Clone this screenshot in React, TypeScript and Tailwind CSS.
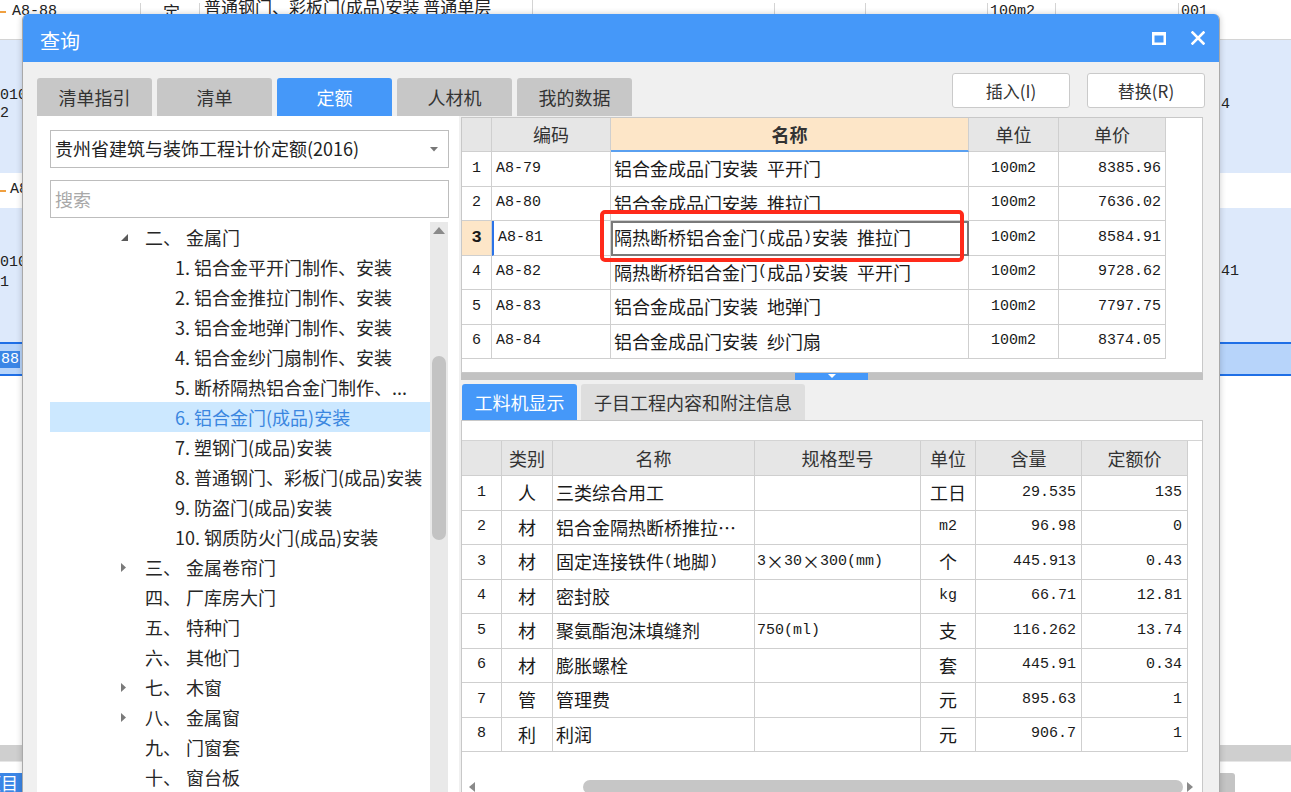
import React from 'react';

const CJK = "font-['Noto_Sans_CJK_SC',sans-serif]";
const MONO = "font-['Liberation_Mono','Noto_Sans_CJK_SC',monospace]";

// splits text into ascii runs (narrow mono) and cjk runs, like the old song-style grid font
function Mixed({ text }: { text: string }) {
  const runs: { s: string; a: boolean }[] = [];
  for (const ch of text) {
    const a = ch.charCodeAt(0) < 128;
    const last = runs[runs.length - 1];
    if (last && last.a === a) last.s += ch;
    else runs.push({ s: ch, a });
  }
  return (
    <>
      {runs.map((r, i) =>
        r.a ? (
          <span key={i} className="font-['Liberation_Mono',monospace] text-[15px] whitespace-pre">
            {r.s}
          </span>
        ) : (
          <span key={i} className="font-['Noto_Sans_CJK_SC',sans-serif] text-[18px]">
            {r.s}
          </span>
        )
      )}
    </>
  );
}

const quotaRows = [
  { code: 'A8-79', name: '铝合金成品门安装 平开门', unit: '100m2', price: '8385.96' },
  { code: 'A8-80', name: '铝合金成品门安装 推拉门', unit: '100m2', price: '7636.02' },
  { code: 'A8-81', name: '隔热断桥铝合金门(成品)安装 推拉门', unit: '100m2', price: '8584.91' },
  { code: 'A8-82', name: '隔热断桥铝合金门(成品)安装 平开门', unit: '100m2', price: '9728.62' },
  { code: 'A8-83', name: '铝合金成品门安装 地弹门', unit: '100m2', price: '7797.75' },
  { code: 'A8-84', name: '铝合金成品门安装 纱门扇', unit: '100m2', price: '8374.05' },
];

const resRows = [
  ['人', '三类综合用工', '', '工日', '29.535', '135'],
  ['材', '铝合金隔热断桥推拉…', '', 'm2', '96.98', '0'],
  ['材', '固定连接铁件(地脚)', '3×30×300(mm)', '个', '445.913', '0.43'],
  ['材', '密封胶', '', 'kg', '66.71', '12.81'],
  ['材', '聚氨酯泡沫填缝剂', '750(ml)', '支', '116.262', '13.74'],
  ['材', '膨胀螺栓', '', '套', '445.91', '0.34'],
  ['管', '管理费', '', '元', '895.63', '1'],
  ['利', '利润', '', '元', '906.7', '1'],
];

type TreeItem = { l: number; a?: 'down' | 'right'; n?: string; t: string; sel?: boolean };

const tree: TreeItem[] = [
  { l: 1, a: 'down', n: '二、', t: '金属门' },
  { l: 2, t: '1. 铝合金平开门制作、安装' },
  { l: 2, t: '2. 铝合金推拉门制作、安装' },
  { l: 2, t: '3. 铝合金地弹门制作、安装' },
  { l: 2, t: '4. 铝合金纱门扇制作、安装' },
  { l: 2, t: '5. 断桥隔热铝合金门制作、...' },
  { l: 2, t: '6. 铝合金门(成品)安装', sel: true },
  { l: 2, t: '7. 塑钢门(成品)安装' },
  { l: 2, t: '8. 普通钢门、彩板门(成品)安装' },
  { l: 2, t: '9. 防盗门(成品)安装' },
  { l: 2, t: '10. 钢质防火门(成品)安装' },
  { l: 1, a: 'right', n: '三、', t: '金属卷帘门' },
  { l: 1, n: '四、', t: '厂库房大门' },
  { l: 1, n: '五、', t: '特种门' },
  { l: 1, n: '六、', t: '其他门' },
  { l: 1, a: 'right', n: '七、', t: '木窗' },
  { l: 1, a: 'right', n: '八、', t: '金属窗' },
  { l: 1, n: '九、', t: '门窗套' },
  { l: 1, n: '十、', t: '窗台板' },
];

function Background() {
  return (
    <div className={`flex flex-col w-full h-full text-[#222] ${MONO} text-[15px]`}>
      {/* top row, mostly under the dialog */}
      <div className="h-[40px] flex border-b border-[#d4d4d4] leading-[18px] pt-[3px]">
        <div className="w-[141px] flex items-start border-r border-[#d4d4d4]">
          <span className="mt-[8px] w-[6px] h-[2px] bg-[#f0a040]" />
          <span className="ml-[6px]">A8-88</span>
        </div>
        <div className="w-[59px] border-r border-[#d4d4d4] pl-[22px]">
          <span className={`${CJK} text-[17px]`}>定</span>
        </div>
        <div className={`w-[333px] border-r border-[#d4d4d4] pl-[4px] ${CJK} text-[17px] -mt-[5px]`}>
          普通钢门、彩板门(成品)安装 普通单层
        </div>
        <div className="w-[242px] border-r border-[#d4d4d4]" />
        <div className="w-[91px] border-r border-[#d4d4d4]" />
        <div className="w-[122px] border-r border-[#d4d4d4]" />
        <div className="w-[68px] border-r border-[#d4d4d4] pl-[2px]">100m2</div>
        <div className="w-[123px] border-r border-[#d4d4d4]" />
        <div className="flex-1 pl-[2px]">001</div>
      </div>
      <div className="h-[133px] bg-[#dde9fb] flex justify-between leading-[18px]">
        <div className="pt-[47px]">
          010
          <br />2
        </div>
        <div className="pt-[56px] w-[70px]">4</div>
      </div>
      <div className="h-[35px] flex items-center">
        <span className="w-[6px] h-[2px] bg-[#f0a040]" />
        <span className="ml-[4px]">A8-81</span>
      </div>
      <div className="h-[134px] bg-[#dde9fb] flex justify-between leading-[20px]">
        <div className="pt-[45px]">
          010
          <br />1
        </div>
        <div className="pt-[54px] w-[70px]">41</div>
      </div>
      <div className="h-[34px] bg-[#b7d4fa] border-y-2 border-[#1f6fe6] flex items-center">
        <span className="bg-[#3b86e6] text-white leading-[17px] px-[1px]">88</span>
      </div>
      <div className="flex-1" />
      <div className="h-[17px] bg-[#cfcfcf] border-b border-[#e6e6e6]" />
      <div className="h-[11px]" />
      <div className="h-[19px] flex justify-between">
        <div className={`w-[22px] bg-[#3b86e6] text-white ${CJK} text-[17px] leading-[19px] overflow-hidden whitespace-nowrap`}>
          <span className="-ml-[16px]">项目</span>
        </div>
        <div className="w-[71px] flex">
          <div className="w-[15px] bg-[#c4c4c4] rounded-tr-[3px]" />
        </div>
      </div>
    </div>
  );
}

function TreeArrow({ dir }: { dir?: 'down' | 'right' }) {
  if (dir === 'down')
    return (
      <svg width="9" height="9" viewBox="0 0 9 9">
        <polygon points="8,1 8,8 1,8" fill="#5a5a5a" />
      </svg>
    );
  if (dir === 'right')
    return (
      <svg width="7" height="11" viewBox="0 0 7 11">
        <polygon points="1,1 6,5.5 1,10" fill="#7a7a7a" />
      </svg>
    );
  return null;
}

function LeftPanel() {
  return (
    <div className="w-[422px] bg-white flex flex-col pl-[13px] pt-[14px]">
      <div className="w-[399px] h-[38px] border border-[#bdbdbd] flex items-center pl-[4px] pr-[10px] bg-white">
        <span className={`${CJK} text-[18px] text-[#222] -mt-[1px]`}>贵州省建筑与装饰工程计价定额(2016)</span>
        <svg className="ml-auto" width="8" height="5" viewBox="0 0 8 5">
          <polygon points="0,0 8,0 4,4.5" fill="#777" />
        </svg>
      </div>
      <div className="mt-[12px] w-[399px] h-[38px] border border-[#bdbdbd] flex items-center pl-[4px]">
        <span className={`${CJK} text-[18px] text-[#a8a8a8]`}>搜索</span>
      </div>
      <div className="mt-[4px] flex flex-1">
        <div className="w-[380px] flex flex-col">
          {tree.map((it, i) => (
            <div
              key={i}
              className={`h-[30px] shrink-0 flex items-center ${CJK} text-[18px] whitespace-nowrap ${
                it.sel ? 'bg-[#cce8ff] text-[#3a86e0]' : 'text-[#262626]'
              } ${it.l === 1 ? 'pl-[70px]' : 'pl-[125px]'}`}
            >
              {it.l === 1 ? (
                <>
                  <span className="w-[25px] flex items-center">
                    <TreeArrow dir={it.a} />
                  </span>
                  <span className="w-[41px]">{it.n}</span>
                  <span>{it.t}</span>
                </>
              ) : (
                <span>{it.t}</span>
              )}
            </div>
          ))}
        </div>
        <div className="w-[18px] bg-[#e9e9e9] flex flex-col items-center pt-[5px]">
          <svg width="12" height="7" viewBox="0 0 12 7">
            <polygon points="6,0 12,7 0,7" fill="#8a8a8a" />
          </svg>
          <div className="mt-[122px] w-[14px] h-[184px] rounded-full bg-[#c3c3c3]" />
        </div>
      </div>
    </div>
  );
}

function QuotaTable() {
  const cell = 'border-r border-b border-[#cfcfcf] flex items-center';
  return (
    <div className="flex flex-col w-[704px]">
      <div className={`flex h-[34px] text-[18px] ${CJK} text-[#333]`}>
        <div className={`${cell} w-[30px] bg-[#e6e6e6]`} />
        <div className={`${cell} w-[119px] bg-[#e6e6e6] justify-center`}>编码</div>
        <div className={`${cell} w-[358px] bg-[#fde6c8] justify-center font-bold border-b-2 border-b-[#5aa0f0]`}>名称</div>
        <div className={`${cell} w-[90px] bg-[#e6e6e6] justify-center`}>单位</div>
        <div className={`${cell} w-[107px] bg-[#e6e6e6] justify-center`}>单价</div>
      </div>
      {quotaRows.map((r, i) => {
        const cur = i === 2;
        return (
          <div key={r.code} className="flex h-[34.5px] text-[#1a1a1a]">
            <div
              className={`${cell} w-[30px] justify-center ${MONO} text-[15px] ${
                cur ? 'bg-[#fde6c8] font-bold text-[17px]' : ''
              }`}
            >
              {i + 1}
            </div>
            <div className={`${cell} w-[119px] pl-[4px] ${MONO} text-[15px] ${cur ? 'border-l-2 border-l-[#2a73e8] pl-[2px]' : ''}`}>
              {r.code}
            </div>
            <div className={`${cell} w-[358px] pl-[3px] whitespace-nowrap ${cur ? 'outline-2 -outline-offset-2 outline-[#7a7a7a]' : ''}`}>
              <Mixed text={r.name} />
            </div>
            <div className={`${cell} w-[90px] justify-center ${MONO} text-[15px]`}>{r.unit}</div>
            <div className={`${cell} w-[107px] justify-end pr-[4px] ${MONO} text-[15px]`}>{r.price}</div>
          </div>
        );
      })}
    </div>
  );
}

function ResourceTable() {
  const cell = 'border-r border-b border-[#cfcfcf] flex items-center';
  const head = `${cell} bg-[#e6e6e6] justify-center`;
  return (
    <div className="flex flex-col w-[726px]">
      <div className={`flex h-[35px] text-[18px] ${CJK} text-[#333]`}>
        <div className={`${head} w-[40px]`} />
        <div className={`${head} w-[51px]`}>类别</div>
        <div className={`${head} w-[202px]`}>名称</div>
        <div className={`${head} w-[166px]`}>规格型号</div>
        <div className={`${head} w-[55px]`}>单位</div>
        <div className={`${head} w-[106px]`}>含量</div>
        <div className={`${head} w-[106px]`}>定额价</div>
      </div>
      {resRows.map((r, i) => (
        <div key={i} className="flex h-[34.5px] text-[#1a1a1a]">
          <div className={`${cell} w-[40px] justify-center ${MONO} text-[15px]`}>{i + 1}</div>
          <div className={`${cell} w-[51px] justify-center ${CJK} text-[18px]`}>{r[0]}</div>
          <div className={`${cell} w-[202px] pl-[3px] whitespace-nowrap`}>
            <Mixed text={r[1]} />
          </div>
          <div className={`${cell} w-[166px] pl-[2px] whitespace-nowrap`}>
            <Mixed text={r[2]} />
          </div>
          <div className={`${cell} w-[55px] justify-center`}>
            <Mixed text={r[3]} />
          </div>
          <div className={`${cell} w-[106px] justify-end pr-[5px] ${MONO} text-[15px]`}>{r[4]}</div>
          <div className={`${cell} w-[106px] justify-end pr-[5px] ${MONO} text-[15px]`}>{r[5]}</div>
        </div>
      ))}
    </div>
  );
}

function RightColumn() {
  return (
    <div className="w-[742px] flex flex-col">
      <div className="mt-[1px] h-[256px] bg-white border border-[#c8c8c8]">
        <QuotaTable />
      </div>
      <div className="h-[7px] bg-[#c2c2c2] flex">
        <div className="w-[334px]" />
        <div className="w-[73px] bg-[#4598f9] flex justify-center pt-[1px]">
          <svg width="8" height="4" viewBox="0 0 8 4">
            <polygon points="0,0 8,0 4,4" fill="#fff" />
          </svg>
        </div>
      </div>
      <div className={`mt-[4px] h-[36px] flex gap-[4px] pl-[1px] ${CJK} text-[18px]`}>
        <div className="w-[115px] rounded-t-[3px] bg-[#4598f9] text-white flex items-center justify-center">工料机显示</div>
        <div className="w-[224px] rounded-t-[3px] bg-[#dedede] text-[#333] flex items-center justify-center">
          子目工程内容和附注信息
        </div>
      </div>
      <div className="flex-1 bg-white border border-[#c8c8c8] flex flex-col">
        <div className="h-[20px] border-b border-[#d4d4d4]" />
        <ResourceTable />
        <div className="mt-[27px] h-[16px] flex items-center">
          <svg className="ml-[7px]" width="6" height="10" viewBox="0 0 6 10">
            <polygon points="6,0 6,10 0,5" fill="#8a8a8a" />
          </svg>
          <div className="ml-[108px] w-[600px] h-[14px] rounded-full bg-[#c6c6c6]" />
          <svg className="ml-[4px]" width="6" height="10" viewBox="0 0 6 10">
            <polygon points="0,0 6,5 0,10" fill="#8a8a8a" />
          </svg>
        </div>
      </div>
    </div>
  );
}

function Dialog() {
  return (
    <div className="absolute left-[22px] top-[14px] w-[1198px] h-[800px] flex flex-col rounded-t-[6px] overflow-hidden border-x border-[#a9a9a9] bg-[#f0f0f0] shadow-[0_0_6px_rgba(0,0,0,0.2)]">
      <div className="h-[48px] shrink-0 bg-[#4598f9] flex items-center pl-[17px] pr-[14px] text-white">
        <span className={`${CJK} text-[20px] mt-[5px]`}>查询</span>
        <div className="ml-auto flex items-center gap-[25px]">
          <svg width="14" height="13" viewBox="0 0 14 13">
            <rect x="1.25" y="1.5" width="11.5" height="10.25" fill="none" stroke="#fff" strokeWidth="2.5" />
            <rect x="0" y="0" width="14" height="3.5" fill="#fff" />
          </svg>
          <svg width="14" height="14" viewBox="0 0 14 14">
            <path d="M1.5 1.5 L12.5 12.5 M12.5 1.5 L1.5 12.5" stroke="#fff" strokeWidth="2.6" strokeLinecap="square" />
          </svg>
        </div>
      </div>
      <div className="flex-1 flex flex-col pl-[14px]">
        <div className="h-[54px] shrink-0 flex items-end pr-[14px]">
          <div className={`flex gap-[5px] ${CJK} text-[18px]`}>
            {['清单指引', '清单', '定额', '人材机', '我的数据'].map((t) => (
              <div
                key={t}
                className={`w-[115px] h-[38px] rounded-t-[3px] flex items-center justify-center ${
                  t === '定额' ? 'bg-[#4598f9] text-white' : 'bg-[#c7c7c7] text-[#333]'
                }`}
              >
                {t}
              </div>
            ))}
          </div>
          <div className={`ml-auto self-start mt-[11px] flex gap-[17px] ${CJK} text-[17px] text-[#333]`}>
            <div className="w-[118px] h-[35px] bg-white border border-[#cacaca] rounded-[3px] flex items-center justify-center">
              插入(I)
            </div>
            <div className="w-[118px] h-[35px] bg-white border border-[#cacaca] rounded-[3px] flex items-center justify-center">
              替换(R)
            </div>
          </div>
        </div>
        <div className="flex-1 flex">
          <LeftPanel />
          <div className="w-[2px]" />
          <RightColumn />
        </div>
      </div>
    </div>
  );
}

export default function App() {
  return (
    <div className="relative w-[1291px] h-[792px] overflow-hidden bg-white">
      <Background />
      <Dialog />
      {/* red annotation box around the chosen row */}
      <div className="absolute left-[600px] top-[210px] w-[364px] h-[52px] border-[4px] border-[#ff2a1a] rounded-[5px]" />
    </div>
  );
}
